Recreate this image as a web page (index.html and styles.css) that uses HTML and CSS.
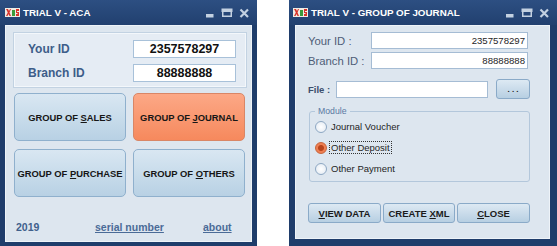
FILE: index.html
```html
<!DOCTYPE html>
<html lang="en">

<head>
  <meta charset="UTF-8" />
  <title>TRIAL V</title>
  <link rel="stylesheet" href="styles.css">
</head>

<body>
  <div class="desk">

    <!-- main launcher window -->
    <section class="window win-main">
      <header class="titlebar">
        <svg class="app-icon" viewBox="0 0 15 9">
          <rect width="15" height="9" fill="#efece4" />
          <path d="M1 1h2l1 2 1-2h1l-1.5 3.5L6 8H4.5L3.5 6 2.5 8H1l1.8-3.5z" fill="#d8322a" />
          <rect x="7" y="2" width="3" height="6" fill="#3a9a3a" />
          <path d="M11 1h3v2h-2v1h2v4h-3v-2h1.5v-1H11z" fill="#d8322a" />
        </svg>
        <span class="title">TRIAL V - ACA</span>
        <svg class="controls" viewBox="0 0 43 10">
          <rect x="0" y="6.5" width="7" height="2.5" />
          <rect x="16.75" y="1.75" width="8.5" height="6.5" fill="none" stroke-width="1.5" />
          <rect x="16" y="1" width="10" height="2.5" />
          <path d="M34.5 1.5l7.5 7.5M42 1.5l-7.5 7.5" stroke-width="2.2" />
        </svg>
      </header>

      <div class="client main-client">
        <div class="id-panel">
          <span class="id-label">Your ID</span>
          <div class="id-box">2357578297</div>
          <span class="id-label">Branch ID</span>
          <div class="id-box">88888888</div>
        </div>

        <div class="group-grid">
          <button class="group-btn">GROUP OF <u>S</u>ALES</button>
          <button class="group-btn active">GROUP OF <u>J</u>OURNAL</button>
          <button class="group-btn">GROUP OF <u>P</u>URCHASE</button>
          <button class="group-btn">GROUP OF <u>O</u>THERS</button>
        </div>

        <footer class="main-footer">
          <span>2019</span>
          <a href="#">serial number</a>
          <a href="#">about</a>
        </footer>
      </div>
    </section>

    <!-- journal window -->
    <section class="window win-journal">
      <header class="titlebar">
        <svg class="app-icon" viewBox="0 0 15 9">
          <rect width="15" height="9" fill="#efece4" />
          <path d="M1 1h2l1 2 1-2h1l-1.5 3.5L6 8H4.5L3.5 6 2.5 8H1l1.8-3.5z" fill="#d8322a" />
          <rect x="7" y="2" width="3" height="6" fill="#3a9a3a" />
          <path d="M11 1h3v2h-2v1h2v4h-3v-2h1.5v-1H11z" fill="#d8322a" />
        </svg>
        <span class="title">TRIAL V - GROUP OF JOURNAL</span>
        <svg class="controls" viewBox="0 0 43 10">
          <rect x="0" y="6.5" width="7" height="2.5" />
          <rect x="16.75" y="1.75" width="8.5" height="6.5" fill="none" stroke-width="1.5" />
          <rect x="16" y="1" width="10" height="2.5" />
          <path d="M34.5 1.5l7.5 7.5M42 1.5l-7.5 7.5" stroke-width="2.2" />
        </svg>
      </header>

      <div class="client journal-client">
        <div class="id-rows">
          <span class="field-label">Your ID :</span>
          <div class="field">2357578297</div>
          <span class="field-label">Branch ID :</span>
          <div class="field">88888888</div>
        </div>

        <div class="file-row">
          <span class="file-label">File :</span>
          <div class="field file-field"></div>
          <button class="small-btn browse-btn">. . .</button>
        </div>

        <fieldset class="module-box">
          <legend>Module</legend>
          <label class="radio-row"><input type="radio" name="module" /><span>Journal Voucher</span></label>
          <label class="radio-row"><input type="radio" name="module" checked /><span class="focused">Other Deposit</span></label>
          <label class="radio-row"><input type="radio" name="module" /><span>Other Payment</span></label>
        </fieldset>

        <div class="action-row">
          <button class="small-btn"><u>V</u>IEW DATA</button>
          <button class="small-btn">CREATE <u>X</u>ML</button>
          <button class="small-btn"><u>C</u>LOSE</button>
        </div>
      </div>
    </section>

  </div>
</body>

</html>
```

FILE: styles.css
```css
body {
  margin: 0;
  background: #fff;
  font-family: 'Liberation Sans', Arial, sans-serif;
  color: #1b1b1b;
}

.desk {
  display: flex;
  height: 246px;
  overflow: hidden;
}

button {
  font-family: inherit;
  padding: 0;
  cursor: pointer;
}

/* window frame */

.window {
  display: flex;
  flex-direction: column;
  height: 246px;
  background: #1f3d6b;
}

.win-main {
  width: 257px;
  margin-right: 32px;
}

.win-journal {
  width: 268px;
}

.titlebar {
  flex: none;
  height: 25px;
  display: flex;
  align-items: center;
  padding: 0 8px 0 5px;
  background: linear-gradient(#2d4f82, #21406f);
  color: #fff;
}

.win-journal .titlebar {
  padding-left: 4px;
}

.app-icon {
  width: 15px;
  height: 9px;
  margin-right: 3px;
}

.title {
  font-size: 9.8px;
  font-weight: bold;
  white-space: nowrap;
}

.controls {
  width: 43px;
  height: 10px;
  margin-left: auto;
  fill: #c3d1e1;
  stroke: #c3d1e1;
}

.client {
  flex: 1;
  background: #dde6ef;
  box-shadow: inset 0 0 0 1px #eef3f8;
}

/* main window */

.main-client {
  margin: 0 5px 4px;
  padding: 7px 5px 0 8px;
}

.id-panel {
  display: grid;
  grid-template-columns: 1fr 103px;
  grid-auto-rows: 18px;
  row-gap: 6px;
  align-items: center;
  padding: 7px 10px 5px 14px;
  border: 1px solid #c2d2e2;
  background: #e5ecf4;
  box-shadow: inset 0 0 0 1px #f3f7fb;
}

.id-label {
  font-size: 12px;
  font-weight: bold;
  color: #3d5d89;
}

.id-box {
  box-sizing: border-box;
  height: 18px;
  border: 1px solid #a8c1d9;
  background: #fff;
  text-align: center;
  font-size: 12.5px;
  font-weight: bold;
  line-height: 16px;
  color: #111;
}

.group-grid {
  display: grid;
  grid-template-columns: 112px 112px;
  grid-auto-rows: 48px;
  gap: 8px 7px;
  margin: 5px 2px 0 1px;
}

.group-btn {
  border: 1px solid #8fb0cd;
  border-radius: 5px;
  background: linear-gradient(#d9e7f2, #b8d1e4);
  font-size: 9.4px;
  font-weight: bold;
  color: #161616;
  white-space: nowrap;
}

.group-btn.active {
  border-color: #d98666;
  background: linear-gradient(#fca886, #f6895d);
}

.main-footer {
  display: grid;
  grid-template-columns: 79px 108px auto;
  margin-top: 24px;
  padding-left: 3px;
  font-size: 10.5px;
  font-weight: bold;
  line-height: 12px;
  color: #3f608c;
}

.main-footer a {
  color: #4a6b97;
}

/* journal window */

.journal-client {
  margin: 0 7px 7px 6px;
  padding: 7px 20px 0 13px;
}

.id-rows {
  display: grid;
  grid-template-columns: 63px 157px;
  grid-auto-rows: 17px;
  row-gap: 3px;
  align-items: center;
}

.field-label {
  font-size: 11.3px;
  color: #4e5d77;
}

.field {
  box-sizing: border-box;
  height: 17px;
  border: 1px solid #a5bcd4;
  background: #fff;
  padding-right: 2px;
  text-align: right;
  font-size: 9.6px;
  line-height: 15px;
  color: #1e1e1e;
}

.file-row {
  display: flex;
  align-items: center;
  height: 20px;
  margin-top: 10px;
}

.file-label {
  width: 28px;
  font-size: 9.5px;
  font-weight: bold;
  color: #3c4e6c;
}

.file-field {
  width: 152px;
}

.small-btn {
  height: 20px;
  border: 1px solid #8aaac8;
  border-radius: 3px;
  background: linear-gradient(#dde9f3, #b7cfe2);
  font-size: 9.5px;
  font-weight: bold;
  color: #1b1b1b;
  white-space: nowrap;
}

.browse-btn {
  width: 34px;
  margin-left: 8px;
  font-size: 8px;
}

.module-box {
  box-sizing: border-box;
  width: 221px;
  margin: 7px 0 0 1px;
  padding: 0 5px 2px;
  border: 1px solid #b3c7db;
  border-radius: 3px;
}

.module-box legend {
  padding: 0 3px;
  font-size: 8.7px;
  line-height: 10px;
  color: #5a79a2;
}

.radio-row {
  display: flex;
  align-items: center;
  height: 21px;
  font-size: 9.5px;
  color: #1e1e1e;
}

.radio-row input {
  appearance: none;
  width: 12px;
  height: 12px;
  margin: 0 2px 0 0;
  border: 1px solid #8ea8c3;
  border-radius: 50%;
  background: radial-gradient(#fff, #e0e8f1);
}

.radio-row input:checked {
  border-color: #c6633a;
  background: radial-gradient(circle, #b9441c 0 2.5px, #ef7f52 3.5px);
}

.radio-row span {
  padding: 0 1px;
  border: 1px dotted transparent;
  line-height: 11px;
}

.radio-row span.focused {
  border-color: #333;
}

.action-row {
  display: grid;
  grid-template-columns: 73px 72px 73px;
  column-gap: 2px;
  margin-top: 21px;
}
```
